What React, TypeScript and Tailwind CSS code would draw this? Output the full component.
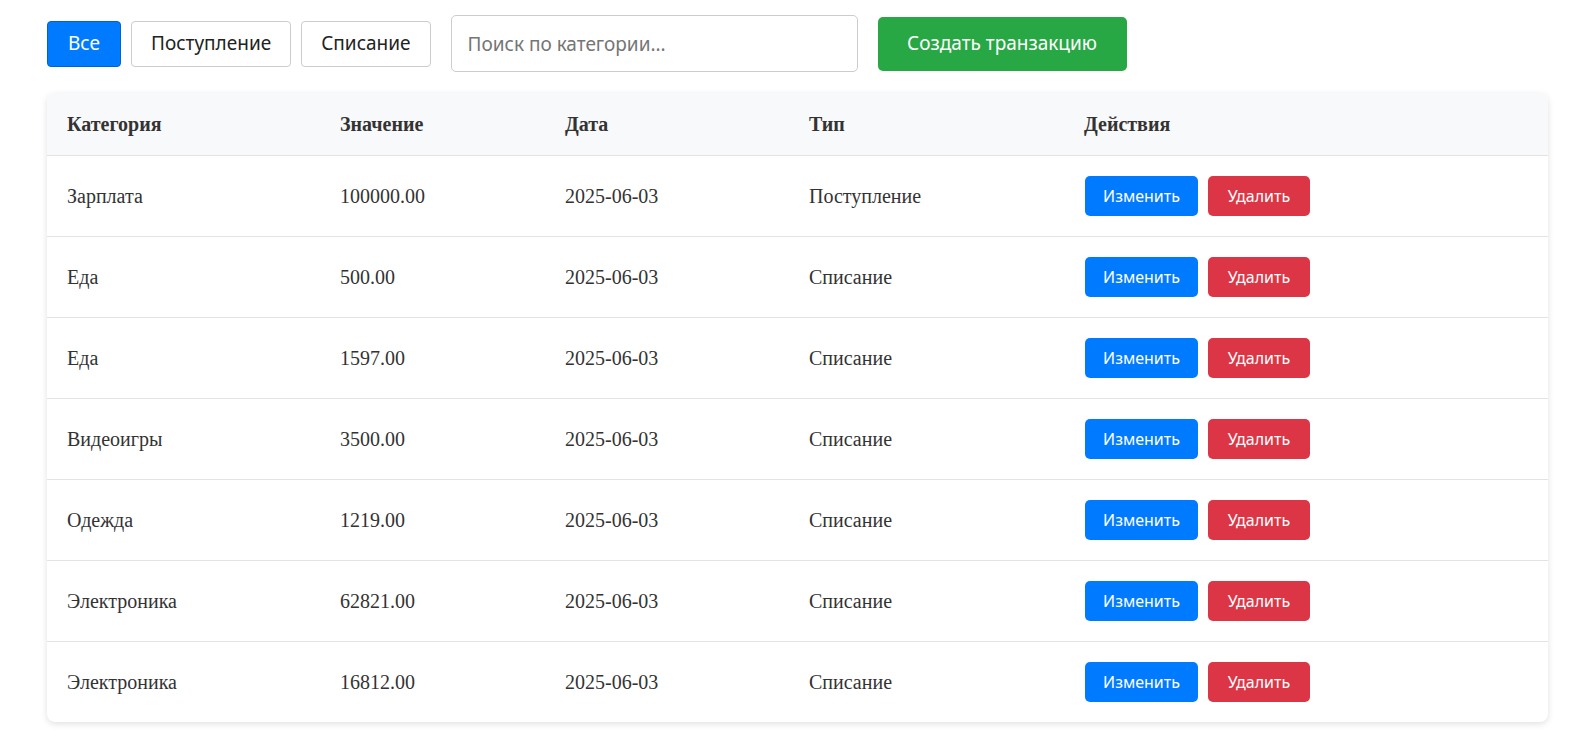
const rows = [
  { category: "Зарплата", value: "100000.00", date: "2025-06-03", type: "Поступление" },
  { category: "Еда", value: "500.00", date: "2025-06-03", type: "Списание" },
  { category: "Еда", value: "1597.00", date: "2025-06-03", type: "Списание" },
  { category: "Видеоигры", value: "3500.00", date: "2025-06-03", type: "Списание" },
  { category: "Одежда", value: "1219.00", date: "2025-06-03", type: "Списание" },
  { category: "Электроника", value: "62821.00", date: "2025-06-03", type: "Списание" },
  { category: "Электроника", value: "16812.00", date: "2025-06-03", type: "Списание" },
];

const sans = "font-['Noto_Sans',sans-serif]";

export default function App() {
  return (
    <main className="min-h-screen bg-white pl-[47px] pr-[39px] pt-[15px] font-['Liberation_Serif',serif] text-[#333]">
      <div className={`flex items-center gap-[10px] ${sans}`}>
        <button className="h-[46px] rounded-[4px] border border-[#0062cc] bg-[#007bff] px-[20px] text-[19px] text-white">
          Все
        </button>
        <button className="h-[46px] rounded-[4px] border border-[#ccc] bg-white px-[19px] text-[19px] text-[#222]">
          Поступление
        </button>
        <button className="h-[46px] rounded-[4px] border border-[#ccc] bg-white px-[19px] text-[19px] text-[#222]">
          Списание
        </button>
        <input
          placeholder="Поиск по категории..."
          className="mx-[10px] h-[57px] w-[407px] rounded-[5px] border border-[#ccc] px-[16px] text-[19px] outline-none placeholder:text-[#757575]"
        />
        <button className="h-[54px] w-[249px] rounded-[5px] bg-[#28a745] text-[19px] text-white">
          Создать транзакцию
        </button>
      </div>

      <div className="mt-[21px] w-[1501px] overflow-hidden rounded-[8px] bg-white shadow-[0_2px_6px_rgba(0,0,0,0.12)]">
        <table className="w-full table-fixed border-collapse text-left text-[20px]">
          <colgroup>
            <col className="w-[293px]" />
            <col className="w-[225px]" />
            <col className="w-[244px]" />
            <col className="w-[275px]" />
            <col />
          </colgroup>
          <thead>
            <tr className="h-[62px] border-b border-[#e3e3e3] bg-[#f8f9fa]">
              <th className="pl-[20px] font-bold">Категория</th>
              <th className="font-bold">Значение</th>
              <th className="font-bold">Дата</th>
              <th className="font-bold">Тип</th>
              <th className="font-bold">Действия</th>
            </tr>
          </thead>
          <tbody>
            {rows.map((r, i) => (
              <tr key={i} className="h-[81px] border-b border-[#e3e3e3] last:border-b-0">
                <td className="pl-[20px]">{r.category}</td>
                <td>{r.value}</td>
                <td>{r.date}</td>
                <td>{r.type}</td>
                <td>
                  <div className={`flex gap-[10px] pl-[1px] ${sans}`}>
                    <button className="h-[40px] w-[113px] rounded-[5px] bg-[#007bff] text-[16px] text-white">
                      Изменить
                    </button>
                    <button className="h-[40px] w-[102px] rounded-[5px] bg-[#dc3545] text-[16px] text-white">
                      Удалить
                    </button>
                  </div>
                </td>
              </tr>
            ))}
          </tbody>
        </table>
      </div>
    </main>
  );
}
